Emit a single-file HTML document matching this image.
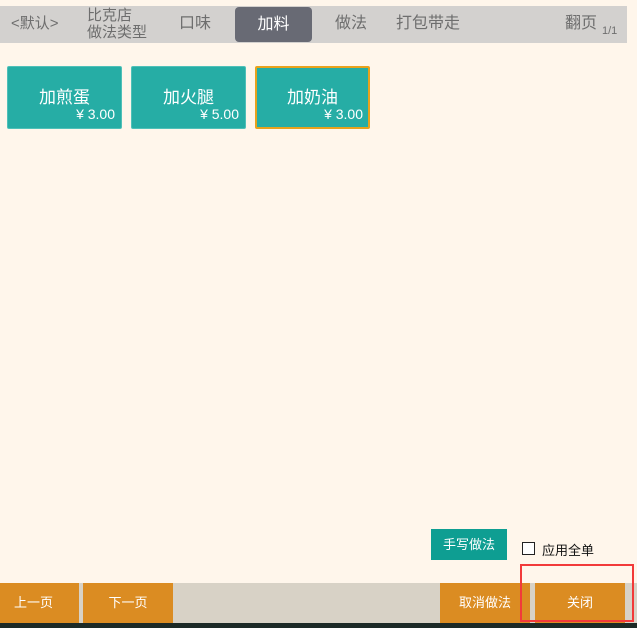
<!DOCTYPE html>
<html><head><meta charset="utf-8"><style>
*{margin:0;padding:0;box-sizing:border-box}
body{width:637px;height:628px;background:#fff6eb;position:relative;overflow:hidden;font-family:"Liberation Sans","Noto Sans CJK SC",sans-serif}
.a{position:absolute}
.top{left:0;top:6px;width:627px;height:37px;background:#d3d1cf}
.t{position:absolute;color:#6e6e6e;font-size:16px;line-height:16px}
.tab{left:235px;top:7px;width:77px;height:35px;background:#686a74;border-radius:4px;color:#fff;font-size:16px;text-align:center;line-height:35px}
.card{position:absolute;top:66px;width:115px;height:63px;background:#26ada5;border:1px solid #4fc0b8;border-radius:2px;color:#fff}
.card .n{position:absolute;left:0;right:0;top:21px;text-align:center;font-size:17px;line-height:20px}
.card .p{position:absolute;right:6px;top:40px;font-size:14px;line-height:15px}
.bb{position:absolute;top:583px;height:40px;background:#db8c22;color:#fff;font-size:13px;text-align:center;line-height:40px}
</style></head><body>
<div class="a top"></div>
<div class="t" style="left:11px;top:16px;font-size:15px">&lt;默认&gt;</div>
<div class="t" style="left:87px;top:7px;line-height:17px;font-size:15px">比克店<br>做法类型</div>
<div class="t" style="left:179px;top:16px">口味</div>
<div class="a tab">加料</div>
<div class="t" style="left:335px;top:16px">做法</div>
<div class="t" style="left:396px;top:16px">打包带走</div>
<div class="t" style="left:565px;top:16px">翻页</div>
<div class="t" style="left:602px;top:26px;font-size:11px;line-height:11px">1/1</div>
<div class="card" style="left:7px"><div class="n">加煎蛋</div><div class="p">¥ 3.00</div></div>
<div class="card" style="left:131px"><div class="n">加火腿</div><div class="p">¥ 5.00</div></div>
<div class="card" style="left:255px;border:2px solid #e8a21c"><div class="n" style="top:20px">加奶油</div><div class="p" style="top:39px;right:5px">¥ 3.00</div></div>
<div class="a" style="left:431px;top:529px;width:76px;height:31px;background:#0e9e92;color:#fff;font-size:13px;text-align:center;line-height:31px">手写做法</div>
<div class="a" style="left:522px;top:542px;width:13px;height:13px;border:1px solid #222;background:#fff"></div>
<div class="a" style="left:542px;top:540px;font-size:13px;color:#111">应用全单</div>
<div class="a" style="left:0;top:583px;width:637px;height:40px;background:#d8d2c6"></div>
<div class="a" style="left:0;top:623px;width:637px;height:5px;background:#1c2a26"></div>
<div class="bb" style="left:0;width:79px;text-align:left;padding-left:14px">上一页</div>
<div class="bb" style="left:83px;width:90px">下一页</div>
<div class="bb" style="left:440px;width:90px">取消做法</div>
<div class="bb" style="left:535px;width:90px">关闭</div>
<div class="a" style="left:520px;top:564px;width:114px;height:58px;border:2px solid #f23a3a"></div>
</body></html>
